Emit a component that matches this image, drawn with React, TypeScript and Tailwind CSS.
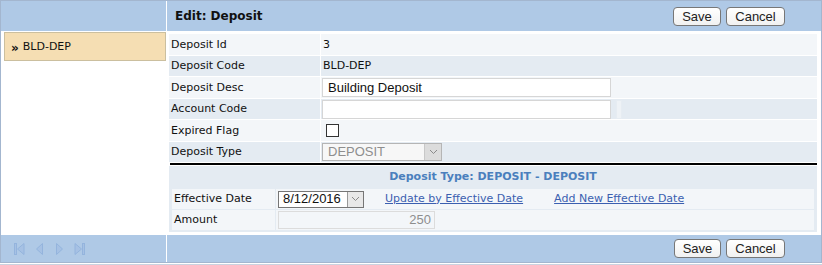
import React from 'react';

const Chevron = () => (
  <svg width="9" height="6" viewBox="0 0 9 6">
    <polyline points="1,1 4.5,4.5 8,1" fill="none" stroke="#8a8a8a" strokeWidth="1" />
  </svg>
);

const Btn = ({ label, w }: { label: string; w: string }) => (
  <button
    className={`${w} h-[19px] rounded-[4px] border border-[#777] bg-gradient-to-b from-white to-[#f1f1f1] text-[13px] leading-none text-[#222] font-['Liberation_Sans',sans-serif]`}
  >
    {label}
  </button>
);

const PagerIcon = ({ kind }: { kind: 'first' | 'prev' | 'next' | 'last' }) => {
  const fill = '#a6c1e4';
  const stroke = '#94b4dd';
  if (kind === 'first')
    return (
      <svg width="11" height="12" viewBox="0 0 11 12">
        <rect x="0.5" y="0.5" width="2" height="11" fill={fill} stroke={stroke} />
        <polygon points="10,0.5 3.5,6 10,11.5" fill={fill} stroke={stroke} />
      </svg>
    );
  if (kind === 'prev')
    return (
      <svg width="7" height="12" viewBox="0 0 7 12">
        <polygon points="6.5,0.5 0.5,6 6.5,11.5" fill={fill} stroke={stroke} />
      </svg>
    );
  if (kind === 'next')
    return (
      <svg width="7" height="12" viewBox="0 0 7 12">
        <polygon points="0.5,0.5 6.5,6 0.5,11.5" fill={fill} stroke={stroke} />
      </svg>
    );
  return (
    <svg width="11" height="12" viewBox="0 0 11 12">
      <polygon points="1,0.5 7.5,6 1,11.5" fill={fill} stroke={stroke} />
      <rect x="8.5" y="0.5" width="2" height="11" fill={fill} stroke={stroke} />
    </svg>
  );
};

const Row = ({
  label,
  dark,
  h,
  children,
}: {
  label: string;
  dark?: boolean;
  h: string;
  children?: React.ReactNode;
}) => (
  <div className={`flex ${h} mb-px ${dark ? 'bg-[#e4ebf2]' : 'bg-[#f3f6f9]'}`}>
    <div className="w-[152px] pl-[2px] pt-[1px] flex items-center text-[#111] border-r border-white">{label}</div>
    <div className="flex-1 flex items-center pl-[1px]">{children}</div>
  </div>
);

export default function App() {
  return (
    <div className="w-[822px] h-[265px] bg-white font-['DejaVu_Sans',sans-serif] text-[11px] text-[#111]">
      <div className="border border-[#a3b6cf] h-[263px] flex flex-col">
        {/* Header */}
        <div className="flex h-[30px] shrink-0">
          <div className="w-[165px] bg-[#afc9e6]" />
          <div className="w-px bg-white" />
          <div className="flex-1 bg-[#afc9e6] flex items-center pl-[8px] pr-[36px]">
            <span className="font-bold text-[12px] text-[#111]">Edit: Deposit</span>
            <div className="ml-auto flex gap-[5px]">
              <Btn label="Save" w="w-[48px]" />
              <Btn label="Cancel" w="w-[59px]" />
            </div>
          </div>
        </div>

        {/* Body */}
        <div className="flex flex-1">
          <div className="w-[166px] pt-[1px] pl-[3px] pr-[1px]">
            <div className="h-[29px] bg-[#f5deb3] border border-[#cbbf9f] flex items-center pl-[6px] pt-[2px] gap-[4px]">
              <span className="font-bold text-[12px] leading-none">»</span>
              <span>BLD-DEP</span>
            </div>
          </div>
          <div className="flex-1 pl-[2px] pr-[4px] pt-[3px]">
            <Row label="Deposit Id" h="h-[21px]">
              <span className="pl-[1px] pt-[1px]">3</span>
            </Row>
            <Row label="Deposit Code" dark h="h-[20px]">
              <span className="pl-[1px] pt-[1px]">BLD-DEP</span>
            </Row>
            <Row label="Deposit Desc" h="h-[21px]">
              <div className="w-[289px] h-[19px] border border-[#d6d6d6] bg-white flex items-center pl-[5px] text-[13px] font-['Liberation_Sans',sans-serif]">
                Building Deposit
              </div>
            </Row>
            <Row label="Account Code" dark h="h-[20px]">
              <div className="w-[289px] h-[19px] border border-[#d6d6d6] bg-white" />
              <div className="ml-[5px] w-[6px] h-[19px] border border-[#e6ecf2] bg-[#eef2f6]" />
            </Row>
            <Row label="Expired Flag" h="h-[21px]">
              <div className="ml-[4px] w-[13px] h-[13px] border border-[#333] bg-white" />
            </Row>
            <Row label="Deposit Type" dark h="h-[20px]">
              <div className="w-[120px] h-[18px] border border-[#b5b5b5] bg-[#f7f7f7] flex items-center text-[13px] text-[#8e8e8e] font-['Liberation_Sans',sans-serif]">
                <span className="pl-[5px] flex-1">DEPOSIT</span>
                <div className="w-[17px] h-full bg-[#dcdcdc] border-l border-[#c8c8c8] flex items-center justify-center">
                  <Chevron />
                </div>
              </div>
            </Row>

            <div className="h-[2px] bg-black ml-px mt-[1px]" />

            <div className="bg-[#e4ebf2] mt-[1px] px-[3px] pb-[2px]">
              <div className="h-[23px] flex items-center justify-center font-bold text-[#4a7fbd]">
                Deposit Type: DEPOSIT - DEPOSIT
              </div>
              <div className="flex h-[20px] bg-[#f3f6f9] mb-[1px]">
                <div className="w-[104px] pl-[2px] pt-[1px] flex items-center border-r border-[#e4ebf2]">Effective Date</div>
                <div className="flex-1 flex items-center pl-[2px]">
                  <div className="w-[86px] h-[17px] border border-[#767676] bg-white flex items-center text-[13px] font-['Liberation_Sans',sans-serif]">
                    <span className="pl-[4px] flex-1">8/12/2016</span>
                    <div className="w-[16px] h-full bg-[#e8e8e8] border-l border-[#999] flex items-center justify-center">
                      <Chevron />
                    </div>
                  </div>
                  <a className="ml-[21px] underline text-[#3b5fb0]">Update by Effective Date</a>
                  <a className="ml-[31px] underline text-[#3b5fb0]">Add New Effective Date</a>
                </div>
              </div>
              <div className="flex h-[20px] bg-[#f3f6f9]">
                <div className="w-[104px] pl-[2px] pt-[1px] flex items-center border-r border-[#e4ebf2]">Amount</div>
                <div className="flex-1 flex items-center pl-[2px]">
                  <div className="w-[157px] h-[18px] border border-[#dcdcdc] bg-[#f3f6f9] flex items-center justify-end pr-[3px] text-[13px] text-[#8e8e8e] font-['Liberation_Sans',sans-serif]">
                    250
                  </div>
                </div>
              </div>
            </div>
          </div>
        </div>

        {/* Footer */}
        <div className="flex h-[27px] shrink-0">
          <div className="w-[165px] bg-[#afc9e6] flex items-center pl-[13px] gap-[11px]">
            <PagerIcon kind="first" />
            <PagerIcon kind="prev" />
            <span className="ml-[2px]"><PagerIcon kind="next" /></span>
            <PagerIcon kind="last" />
          </div>
          <div className="w-px bg-white" />
          <div className="flex-1 bg-[#afc9e6] flex items-center justify-end pr-[36px]">
            <div className="flex gap-[5px]">
              <Btn label="Save" w="w-[47px]" />
              <Btn label="Cancel" w="w-[59px]" />
            </div>
          </div>
        </div>
      </div>
      <div className="h-px" />
      <div className="h-px bg-[#c9d3e0]" />
    </div>
  );
}
